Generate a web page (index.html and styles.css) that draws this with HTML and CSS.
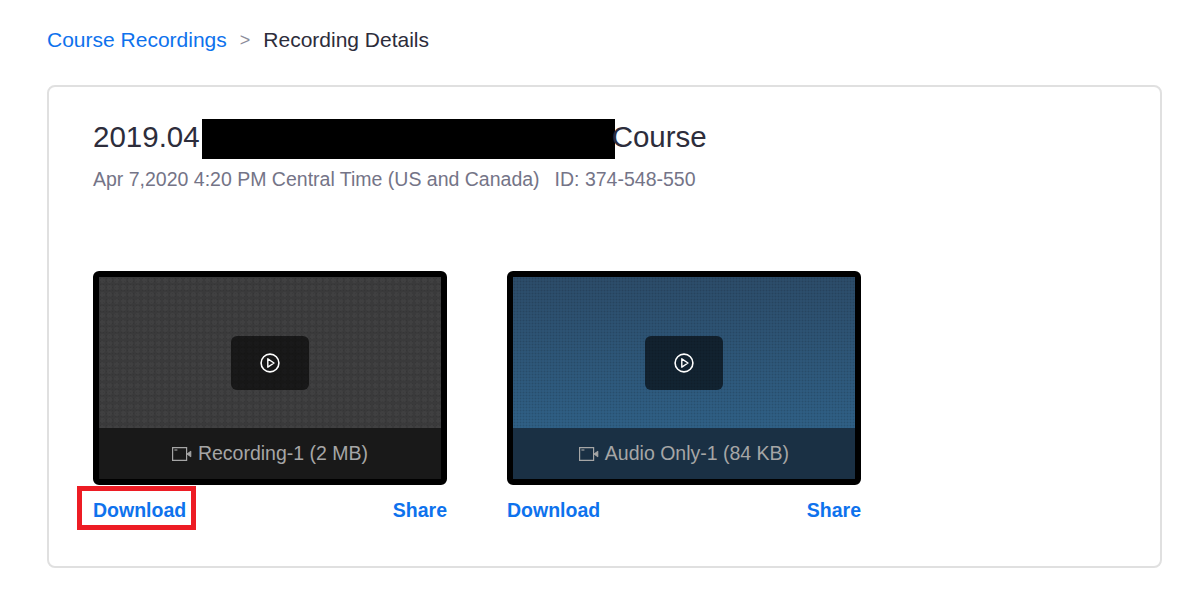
FILE: index.html
```html
<!DOCTYPE html>
<html lang="en">
<head>
    <meta charset="UTF-8">
    <meta name="viewport" content="width=device-width, initial-scale=1.0">
    <title>Recording Details</title>
    <link rel="stylesheet" href="styles.css">
</head>
<body>
<svg class="defs" width="0" height="0">
    <symbol id="icon-play" viewBox="0 0 20 20">
        <circle cx="10" cy="10" r="8.9" fill="none" stroke="currentColor" stroke-width="1.6"/>
        <path d="M7.8 5.8 L14 10 L7.8 14.2 Z" fill="none" stroke="currentColor" stroke-width="1.4" stroke-linejoin="round"/>
    </symbol>
    <symbol id="icon-video" viewBox="0 0 20 14">
        <path d="M.6.6h14v12.8H.6z" fill="none" stroke="currentColor" stroke-width="1.2"/>
        <path d="M2.4 3h3" fill="none" stroke="currentColor" stroke-width="1.1"/>
        <path d="M15 7 L18.8 4.2 V9.8 Z" fill="currentColor" stroke="currentColor" stroke-width="1"/>
    </symbol>
</svg>
<div class="breadcrumb">
    <a href="#" class="crumb-link">Course Recordings</a>
    <span class="crumb-sep">&gt;</span>
    <span class="crumb-current">Recording Details</span>
</div>
<div class="card">
    <h2 class="title">2019.04<span class="redacted"></span>Course</h2>
    <div class="meta">
        <span>Apr 7,2020 4:20 PM Central Time (US and Canada)</span>
        <span>ID: 374-548-550</span>
    </div>
    <div class="recordings">
        <div class="recording">
            <div class="thumb thumb-gray">
                <div class="thumb-main">
                    <div class="play-btn"><svg class="play-icon"><use href="#icon-play"/></svg></div>
                </div>
                <div class="thumb-label">
                    <svg class="video-icon"><use href="#icon-video"/></svg>
                    <span>Recording-1 (2 MB)</span>
                </div>
            </div>
            <div class="actions">
                <a href="#" class="action highlighted">Download</a>
                <a href="#" class="action">Share</a>
            </div>
        </div>
        <div class="recording">
            <div class="thumb thumb-blue">
                <div class="thumb-main">
                    <div class="play-btn"><svg class="play-icon"><use href="#icon-play"/></svg></div>
                </div>
                <div class="thumb-label">
                    <svg class="video-icon"><use href="#icon-video"/></svg>
                    <span>Audio Only-1 (84 KB)</span>
                </div>
            </div>
            <div class="actions">
                <a href="#" class="action">Download</a>
                <a href="#" class="action">Share</a>
            </div>
        </div>
    </div>
</div>
</body>
</html>
```

FILE: styles.css
```css
body {
    font-family: "Liberation Sans", Arial, sans-serif;
    background-color: #fff;
    color: #232333;
    margin: 0;
    padding: 0 21px 0 47px;
}

a {
    text-decoration: none;
}

.defs {
    position: absolute;
}

.breadcrumb {
    display: flex;
    align-items: center;
    height: 85px;
    padding-bottom: 5px;
    box-sizing: border-box;
    font-size: 21px;
}

.crumb-link {
    color: #0e72ed;
}

.crumb-sep {
    color: #8c8c9a;
    margin: 0 13px;
    font-size: 18px;
}

.crumb-current {
    color: #2d2d3b;
}

.card {
    height: 483px;
    box-sizing: border-box;
    border: 2px solid #e0e0e0;
    border-radius: 8px;
    padding: 32px 44px 0;
}

.title {
    display: flex;
    align-items: flex-start;
    height: 40px;
    margin: 0;
    font-size: 29.5px;
    font-weight: normal;
    line-height: 36px;
    color: #2d2d3b;
}

.redacted {
    width: 413px;
    height: 40px;
    margin-left: 2px;
    margin-right: -3px;
    background-color: #000;
}

.meta {
    display: flex;
    gap: 15px;
    margin-top: 9px;
    font-size: 19.5px;
    line-height: 23px;
    color: #747487;
}

.recordings {
    display: flex;
    gap: 60px;
    margin-top: 80px;
}

.recording {
    width: 354px;
}

.thumb {
    display: flex;
    flex-direction: column;
    height: 214px;
    box-sizing: border-box;
    border: 6px solid #000;
    border-radius: 6px;
}

.thumb-gray {
    background-color: #3a3a3b;
    background-image:
        radial-gradient(rgba(0, 0, 0, 0.08) 0.8px, transparent 1px),
        radial-gradient(rgba(255, 255, 255, 0.03) 2px, transparent 3px);
    background-size: 3px 3px, 7px 7px;
}

.thumb-blue {
    background-color: #2d5a80;
    background-image:
        radial-gradient(rgba(0, 0, 0, 0.14) 0.8px, transparent 1.1px),
        linear-gradient(#2c4c69, #30668f);
    background-size: 3px 3px, 100% 100%;
}

.thumb-main {
    flex: 1;
    display: flex;
    align-items: center;
    justify-content: center;
    padding-top: 20px;
}

.play-btn {
    display: flex;
    align-items: center;
    justify-content: center;
    width: 78px;
    height: 54px;
    border-radius: 6px;
    color: #fff;
    background-color: rgba(0, 0, 0, 0.6);
}

.play-icon {
    width: 20px;
    height: 20px;
}

.thumb-label {
    display: flex;
    align-items: center;
    justify-content: center;
    gap: 6px;
    height: 51px;
    font-size: 19.5px;
    color: #a6a6a6;
}

.thumb-gray .thumb-label {
    background-color: #191919;
}

.thumb-blue .thumb-label {
    background-color: #1a3044;
}

.video-icon {
    width: 20px;
    height: 14px;
}

.actions {
    display: flex;
    justify-content: space-between;
    margin-top: 14px;
}

.action {
    font-size: 19.5px;
    font-weight: bold;
    color: #0e72ed;
}

/* red annotation box drawn over the first download link */
.highlighted {
    position: relative;
}

.highlighted::after {
    content: "";
    position: absolute;
    left: -16px;
    right: -10px;
    top: -13px;
    bottom: -8px;
    border: 5px solid #ed1c24;
}
```
